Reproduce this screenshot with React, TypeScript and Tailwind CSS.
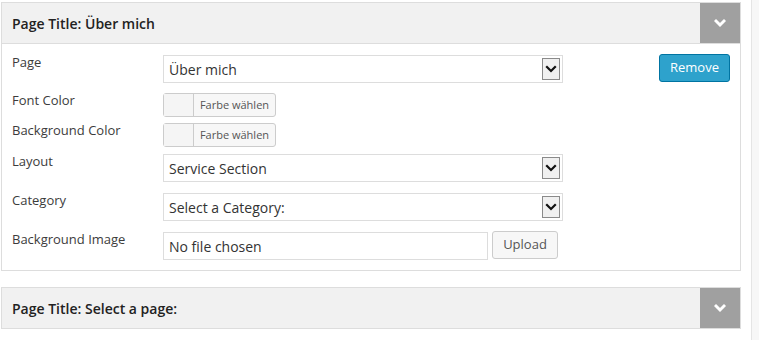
import { ReactNode } from 'react';

const font = { fontFamily: '"Open Sans", "Liberation Sans", sans-serif' };

function Chevron({ color = '#fff', size = 12, stroke = 3 }: { color?: string; size?: number; stroke?: number }) {
  return (
    <svg width={size} height={size} viewBox="0 0 12 12">
      <polyline points="2,4 6,8 10,4" fill="none" stroke={color} strokeWidth={stroke} strokeLinecap="square" />
    </svg>
  );
}

function PanelHeader({ title }: { title: string }) {
  return (
    <div className="flex h-[40px] items-center bg-[#f1f1f1]">
      <div className="flex-1 pl-[10px] text-[14px] font-semibold text-[#222]">{title}</div>
      <div className="flex h-[40px] w-[40px] items-center justify-center bg-[#a0a0a0]">
        <Chevron />
      </div>
    </div>
  );
}

function FakeSelect({ value }: { value: string }) {
  return (
    <div className="flex h-[28px] w-[400px] items-center border border-[#ddd] bg-white pl-[5px] pr-[2px] text-[14px] text-[#333]">
      <span className="flex-1">{value}</span>
      <div className="flex h-[22px] w-[18px] items-center justify-center border border-[#8a8a8a] bg-[#f0f0f0]">
        <Chevron color="#111" size={12} stroke={2.2} />
      </div>
    </div>
  );
}

function ColorButton() {
  return (
    <div className="flex h-[24px] w-[113px] rounded-[3px] border border-[#ccc] bg-[#f7f7f7]">
      <div className="w-[30px] border-r border-[#ccc] bg-[#f5f5f5]" />
      <div className="flex flex-1 items-center justify-center text-[11px] text-[#555]">Farbe wählen</div>
    </div>
  );
}

function Row({ label, children, className = '' }: { label: string; children: ReactNode; className?: string }) {
  return (
    <div className={`flex items-start ${className}`}>
      <div className="mt-[-3px] w-[151px] text-[13px] leading-[20px] text-[#3c3c3c]">{label}</div>
      {children}
    </div>
  );
}

export default function App() {
  return (
    <div className="flex h-[340px] w-[759px] bg-white" style={font}>
      <div className="w-[751px] pl-[1px] pt-[2px]">
        <div className="w-[740px] border border-[#ddd]">
          <div className="border-b border-[#ddd]">
            <PanelHeader title="Page Title: Über mich" />
          </div>
          <div className="bg-white pb-[10px] pl-[10px] pr-[10px] pt-[11px]">
            <Row label="Page">
              <FakeSelect value="Über mich" />
              <div className="flex-1" />
              <button className="mt-[-1px] h-[28px] w-[71px] rounded-[3px] border border-[#0074a2] bg-[#2ea2cc] text-[13px] text-white">
                Remove
              </button>
            </Row>
            <Row label="Font Color" className="mt-[10px]">
              <ColorButton />
            </Row>
            <Row label="Background Color" className="mt-[6px]">
              <ColorButton />
            </Row>
            <Row label="Layout" className="mt-[7px]">
              <FakeSelect value="Service Section" />
            </Row>
            <Row label="Category" className="mt-[11px]">
              <FakeSelect value="Select a Category:" />
            </Row>
            <Row label="Background Image" className="mt-[11px]">
              <div className="flex h-[28px] w-[325px] items-center border border-[#ddd] bg-white pl-[5px] text-[14px] text-[#333]">
                No file chosen
              </div>
              <button className="ml-[4px] mt-[-1px] h-[28px] w-[66px] rounded-[3px] border border-[#ccc] bg-[#f7f7f7] text-[13px] text-[#555]">
                Upload
              </button>
            </Row>
          </div>
        </div>
        <div className="mt-[16px] w-[740px] border border-[#ddd]">
          <PanelHeader title="Page Title: Select a page:" />
        </div>
      </div>
      <div className="flex-1 border-l border-[#e5e5e5] bg-[#f7f7f7]" />
    </div>
  );
}
